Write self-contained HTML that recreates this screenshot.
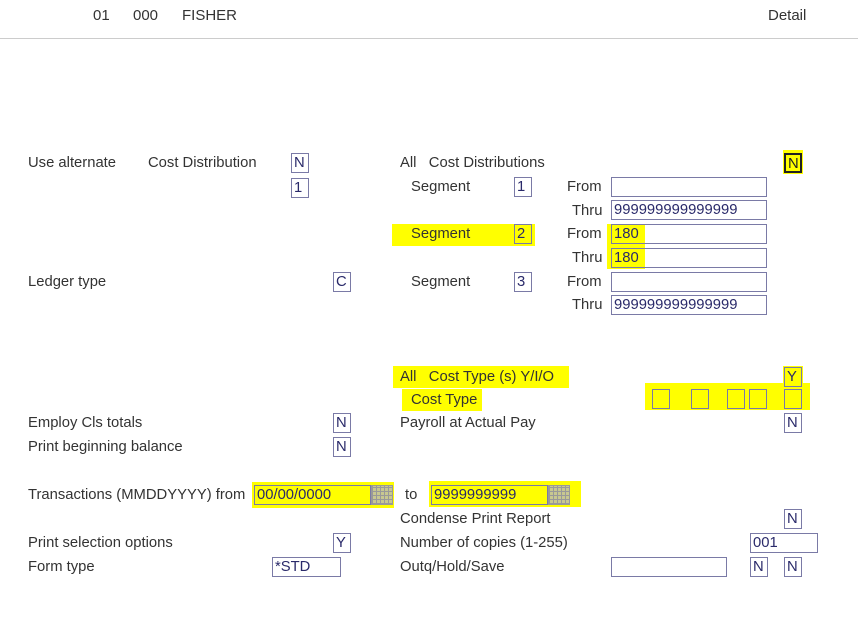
<!DOCTYPE html>
<html><head><style>
body{margin:0;width:858px;height:624px;background:#fff;font-family:"Liberation Sans",sans-serif;font-size:14.8px;color:#333;position:relative;overflow:hidden}
.t{position:absolute;line-height:18px;white-space:nowrap}
.b{position:absolute;border:1px solid #7a7aa6;box-sizing:border-box;height:20px;line-height:18px;padding-left:2px;color:#2a2a6a;font-size:14.8px}
.s{width:18px}
.hl{position:absolute;background:#ffff00}
.cal{position:absolute;width:22px;height:20px;background:#c8c890;border:1px solid #999;box-sizing:border-box;background-image:repeating-linear-gradient(90deg,#999 0 1px,transparent 1px 4px),repeating-linear-gradient(0deg,#999 0 1px,transparent 1px 4px)}
</style></head><body>
<div class="t" style="left:93px;top:7px;font-size:15px">01</div>
<div class="t" style="left:133px;top:7px;font-size:15px">000</div>
<div class="t" style="left:182px;top:7px;font-size:15px">FISHER</div>
<div class="t" style="left:768px;top:7px;font-size:15px">Detail</div>
<div style="position:absolute;left:0;top:38px;width:858px;height:1px;background:#ccc"></div>

<div class="hl" style="left:392px;top:224px;width:143px;height:22px"></div>
<div class="hl" style="left:607px;top:224px;width:38px;height:45px"></div>
<div class="hl" style="left:783px;top:150px;width:20px;height:24px"></div>
<div class="hl" style="left:393px;top:366px;width:176px;height:22px"></div>
<div class="hl" style="left:402px;top:389px;width:80px;height:22px"></div>
<div class="hl" style="left:645px;top:383px;width:165px;height:27px"></div>
<div class="hl" style="left:783px;top:366px;width:20px;height:22px"></div>
<div class="hl" style="left:252px;top:482px;width:142px;height:26px"></div>
<div class="hl" style="left:429px;top:481px;width:152px;height:26px"></div>

<div class="t" style="left:28px;top:154px">Use alternate</div>
<div class="t" style="left:148px;top:154px">Cost Distribution</div>
<div class="b s" style="left:291px;top:153px">N</div>
<div class="b s" style="left:291px;top:178px">1</div>
<div class="t" style="left:400px;top:154px">All&nbsp;&nbsp;&nbsp;Cost Distributions</div>
<div class="b s" style="left:784px;top:153px;border:2px solid #222;color:#222">N</div>

<div class="t" style="left:411px;top:178px">Segment</div><div class="b s" style="left:514px;top:177px">1</div>
<div class="t" style="left:567px;top:178px">From</div><div class="b" style="left:611px;top:177px;width:156px"></div>
<div class="t" style="left:572px;top:202px">Thru</div><div class="b" style="left:611px;top:200px;width:156px">999999999999999</div>
<div class="t" style="left:411px;top:225px">Segment</div><div class="b s" style="left:514px;top:224px">2</div>
<div class="t" style="left:567px;top:225px">From</div><div class="b" style="left:611px;top:224px;width:156px">180</div>
<div class="t" style="left:572px;top:249px">Thru</div><div class="b" style="left:611px;top:248px;width:156px">180</div>
<div class="t" style="left:28px;top:273px">Ledger type</div><div class="b s" style="left:333px;top:272px">C</div>
<div class="t" style="left:411px;top:273px">Segment</div><div class="b s" style="left:514px;top:272px">3</div>
<div class="t" style="left:567px;top:273px">From</div><div class="b" style="left:611px;top:272px;width:156px"></div>
<div class="t" style="left:572px;top:296px">Thru</div><div class="b" style="left:611px;top:295px;width:156px">999999999999999</div>

<div class="t" style="left:400px;top:368px">All&nbsp;&nbsp;&nbsp;Cost Type (s) Y/I/O</div>
<div class="b s" style="left:784px;top:367px">Y</div>
<div class="t" style="left:411px;top:391px">Cost Type</div>
<div class="b s" style="left:652px;top:389px"></div>
<div class="b s" style="left:691px;top:389px"></div>
<div class="b s" style="left:727px;top:389px"></div>
<div class="b s" style="left:749px;top:389px"></div>
<div class="b s" style="left:784px;top:389px"></div>

<div class="t" style="left:28px;top:414px">Employ Cls totals</div><div class="b s" style="left:333px;top:413px">N</div>
<div class="t" style="left:400px;top:414px">Payroll at Actual Pay</div><div class="b s" style="left:784px;top:413px">N</div>
<div class="t" style="left:28px;top:438px">Print beginning balance</div><div class="b s" style="left:333px;top:437px">N</div>

<div class="t" style="left:28px;top:486px">Transactions (MMDDYYYY) from</div>
<div class="b" style="left:254px;top:485px;width:117px">00/00/0000</div><div class="cal" style="left:371px;top:485px"></div>
<div class="t" style="left:405px;top:486px">to</div>
<div class="b" style="left:431px;top:485px;width:117px">9999999999</div><div class="cal" style="left:548px;top:485px"></div>

<div class="t" style="left:400px;top:510px">Condense Print Report</div><div class="b s" style="left:784px;top:509px">N</div>
<div class="t" style="left:28px;top:534px">Print selection options</div><div class="b s" style="left:333px;top:533px">Y</div>
<div class="t" style="left:400px;top:534px">Number of copies (1-255)</div><div class="b" style="left:750px;top:533px;width:68px">001</div>
<div class="t" style="left:28px;top:558px">Form type</div><div class="b" style="left:272px;top:557px;width:69px">*STD</div>
<div class="t" style="left:400px;top:558px">Outq/Hold/Save</div>
<div class="b" style="left:611px;top:557px;width:116px"></div>
<div class="b s" style="left:750px;top:557px">N</div><div class="b s" style="left:784px;top:557px">N</div>
</body></html>
